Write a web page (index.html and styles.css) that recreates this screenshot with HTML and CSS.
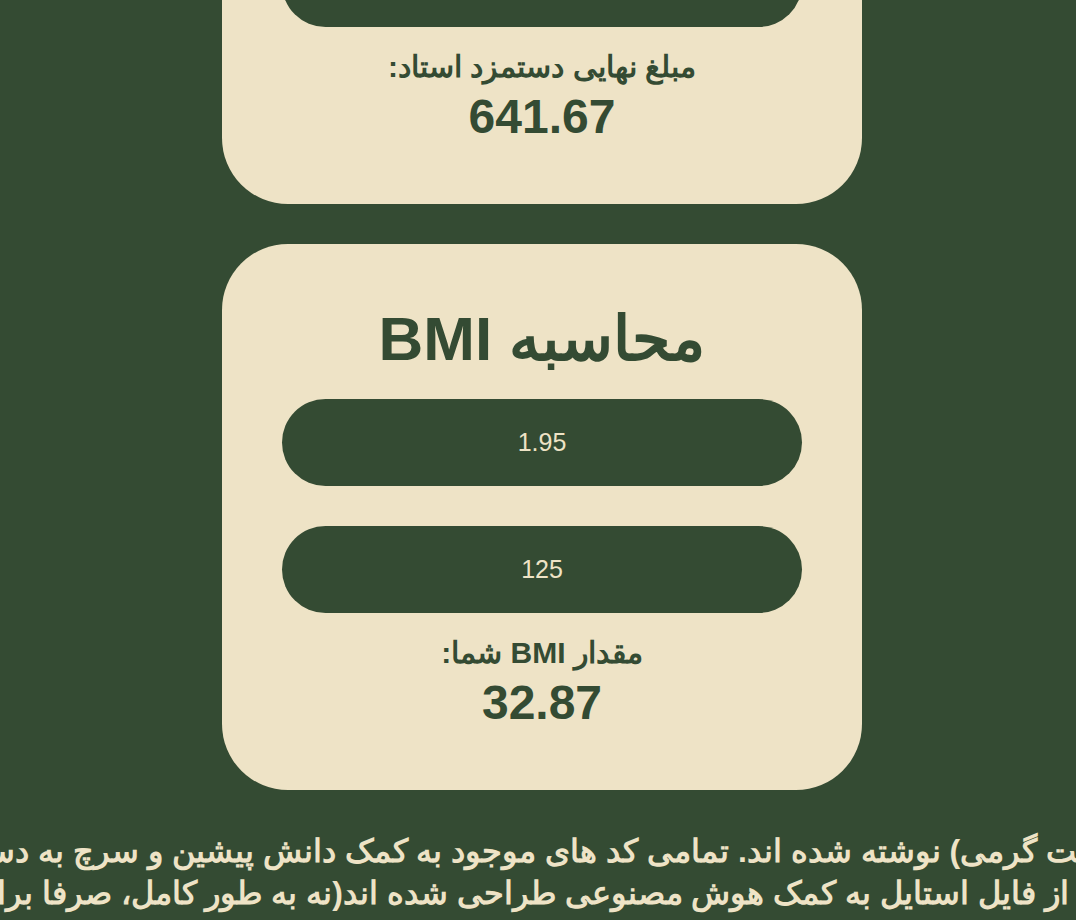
FILE: index.html
```html
<!DOCTYPE html>
<html lang="fa" dir="rtl">
<head>
<meta charset="utf-8">
<title>ماشین حساب ها</title>
<link rel="stylesheet" href="styles.css">
</head>
<body>
<main class="page">
  <section class="card">
    <h1 class="card-title">محاسبه دستمزد</h1>
    <input class="field" type="text" value="35" readonly>
    <input class="field" type="text" value="18.33" readonly>
    <h3 class="result-label">مبلغ نهایی دستمزد استاد:</h3>
    <p class="result-value">641.67</p>
  </section>
  <section class="card">
    <h1 class="card-title">محاسبه BMI</h1>
    <input class="field" type="text" value="1.95" readonly>
    <input class="field" type="text" value="125" readonly>
    <h3 class="result-label">مقدار BMI شما:</h3>
    <p class="result-value">32.87</p>
  </section>
</main>
<footer class="footer">
  <p class="footer-line"><span>این کد ها (جهت دست گرمی) نوشته شده اند. تمامی کد های موجود به کمک دانش پیشین و سرچ به دست آمده اند و بس.</span></p>
  <p class="footer-line"><span>بخش هایی از فایل استایل به کمک هوش مصنوعی طراحی شده اند(نه به طور کامل، صرفا برای زیبایی).</span></p>
</footer>
</body>
</html>
```
FILE: styles.css
```css
html, body {
  margin: 0;
  padding: 0;
}
body {
  background: #344b33;
  color: #344b33;
  font-family: "Liberation Sans", Arial, sans-serif;
  overflow: hidden;
  padding-left: 8px;
}
.page {
  display: flex;
  flex-direction: column;
  align-items: center;
  gap: 40px;
  margin-top: -342px;
}
.card {
  box-sizing: border-box;
  width: 640px;
  background: #eee3c6;
  border-radius: 66px;
  padding: 59px 60px 57px;
  display: flex;
  flex-direction: column;
  align-items: center;
}
.card-title {
  margin: 0 0 25px;
  font-size: 62px;
  font-weight: bold;
  line-height: 71px;
}
.field {
  box-sizing: border-box;
  width: 520px;
  height: 87px;
  margin: 0 0 40px;
  border: none;
  border-radius: 44px;
  background: #344b33;
  color: #eee3c6;
  font-family: "Liberation Sans", Arial, sans-serif;
  font-size: 25px;
  text-align: center;
  outline: none;
}
.field + .field {
  margin-bottom: 20px;
}
.result-label {
  margin: 0;
  font-size: 30px;
  font-weight: bold;
  line-height: 40px;
}
.result-value {
  margin: 0;
  font-size: 48px;
  font-weight: bold;
  line-height: 60px;
}
.footer {
  margin-top: 40px;
  color: #eee3c6;
}
.footer-line {
  display: flex;
  justify-content: center;
  margin: 0;
  white-space: nowrap;
  font-size: 32px;
  font-weight: bold;
  line-height: 42px;
}
```
